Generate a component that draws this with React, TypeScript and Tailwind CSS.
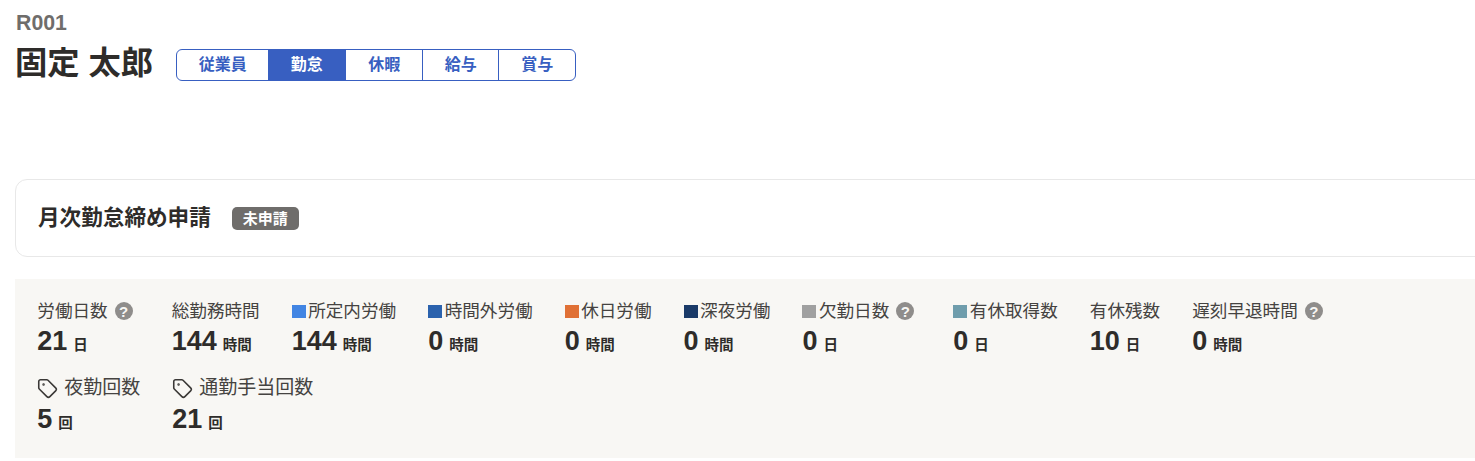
import React from "react";
import { Tag } from "lucide-react";

const tabs = ["従業員", "勤怠", "休暇", "給与", "賞与"];

type Stat = {
  label: string;
  value: string;
  unit: string;
  swatch?: string;
  help?: boolean;
};

const stats: Stat[] = [
  { label: "労働日数", value: "21", unit: "日", help: true },
  { label: "総勤務時間", value: "144", unit: "時間" },
  { label: "所定内労働", value: "144", unit: "時間", swatch: "bg-[#4285e3]" },
  { label: "時間外労働", value: "0", unit: "時間", swatch: "bg-[#2b62ad]" },
  { label: "休日労働", value: "0", unit: "時間", swatch: "bg-[#e07035]" },
  { label: "深夜労働", value: "0", unit: "時間", swatch: "bg-[#1a3a68]" },
  { label: "欠勤日数", value: "0", unit: "日", swatch: "bg-[#a0a0a0]", help: true },
  { label: "有休取得数", value: "0", unit: "日", swatch: "bg-[#6f9dac]" },
  { label: "有休残数", value: "10", unit: "日" },
  { label: "遅刻早退時間", value: "0", unit: "時間", help: true },
];

const counts = [
  { label: "夜勤回数", value: "5" },
  { label: "通勤手当回数", value: "21" },
];

function Help() {
  return (
    <span className="ml-[7px] mr-[7px] flex h-[18px] w-[18px] items-center justify-center rounded-full bg-[#8f8d8b] text-[15px] font-bold leading-none text-[#f8f7f4]">
      ?
    </span>
  );
}

function Value({ value, unit }: { value: string; unit: string }) {
  return (
    <div className="mt-[2px] flex h-[31px] items-baseline font-bold text-[#2e2c2a]">
      <span className="text-[27px] leading-[31px]">{value}</span>
      <span className="ml-[6px] text-[14.5px] leading-none">{unit}</span>
    </div>
  );
}

export default function App() {
  return (
    <div className="h-[461px] w-full overflow-hidden bg-white pl-[15px] font-['Liberation_Sans','Noto_Sans_CJK_JP',sans-serif] text-[#2e2c2a]">
      <p className="pl-px pt-[10px] text-[21.3px] font-bold leading-[26px] text-[#6f6d6b]">R001</p>
      <div className="mt-[10px] flex items-center">
        <h1 className="h-[38px] text-[32.3px] font-bold leading-[35px]">固定 太郎</h1>
        <div className="ml-[23px] flex h-[32px] overflow-hidden rounded-md border border-[#385fc1]">
          {tabs.map((tab, i) => (
            <div
              key={tab}
              className={
                i === 1
                  ? "flex w-[77px] items-center justify-center bg-[#385fc1] text-[16px] font-bold text-white"
                  : i === 0
                    ? "flex w-[91px] items-center justify-center text-[16px] font-bold text-[#385fc1]"
                    : i === 3
                      ? "flex w-[76px] items-center justify-center border-l border-[#385fc1] text-[16px] font-bold text-[#385fc1]"
                      : "flex w-[77px] items-center justify-center border-l border-[#385fc1] text-[16px] font-bold text-[#385fc1]"
              }
            >
              {tab}
            </div>
          ))}
        </div>
      </div>

      <div className="mt-[95px] flex h-[78px] w-[1500px] items-center rounded-xl border border-[#e8e8e8] pl-[22px]">
        <h2 className="text-[21.6px] font-bold">月次勤怠締め申請</h2>
        <span className="ml-[21px] rounded-[5px] bg-[#6f6d6b] px-[11px] py-[2px] text-[15px] font-bold leading-[19px] text-white">
          未申請
        </span>
      </div>

      <div className="mt-[22px] h-[179px] bg-[#f8f7f4] pl-[22.3px] pt-[19px]">
        <div className="flex flex-wrap gap-x-8">
          {stats.map((s) => (
            <div key={s.label}>
              <div className="flex h-[26px] items-center text-[17.6px] leading-[26px] text-[#454341]">
                {s.swatch && <span className={`mr-[2.5px] h-[13px] w-[14px] ${s.swatch}`} />}
                {s.label}
                {s.help && <Help />}
              </div>
              <Value value={s.value} unit={s.unit} />
            </div>
          ))}
        </div>
        <div className="mt-[18px] flex gap-x-8">
          {counts.map((c) => (
            <div key={c.label}>
              <div className="mb-[3px] flex h-[26px] items-center text-[19px] leading-[26px] text-[#454341]">
                <Tag size={21} strokeWidth={1.8} className="mr-[6px] text-[#3a3836]" />
                {c.label}
              </div>
              <Value value={c.value} unit="回" />
            </div>
          ))}
        </div>
      </div>
    </div>
  );
}
